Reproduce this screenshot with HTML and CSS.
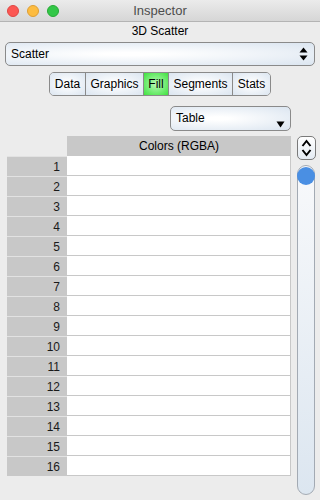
FILE: index.html
```html
<!DOCTYPE html>
<html lang="en">
<head>
    <meta charset="UTF-8">
    <meta name="viewport" content="width=device-width, initial-scale=1.0">
    <title>Inspector</title>
    <link rel="stylesheet" href="styles.css">
</head>
<body>

    <div class="window">

        <!-- Title bar -->
        <div class="titlebar">
            <div class="lights">
                <span class="light red"></span>
                <span class="light yellow"></span>
                <span class="light green"></span>
            </div>
            <div class="title">Inspector</div>
            <div></div>
        </div>

        <div class="subtitle">3D Scatter</div>

        <!-- Plot type popup -->
        <div class="popup main-popup">
            <span>Scatter</span>
            <svg class="updown" width="9" height="14" viewBox="0 0 9 14">
                <path d="M4.5 0.5 L8.5 5.5 L0.5 5.5 Z" fill="#000"/>
                <path d="M4.5 13.5 L8.5 8.5 L0.5 8.5 Z" fill="#000"/>
            </svg>
        </div>

        <!-- Tabs -->
        <div class="tabs-row">
            <div class="tabs">
                <div class="tab tab-data">Data</div>
                <div class="tab tab-graphics">Graphics</div>
                <div class="tab tab-fill selected">Fill</div>
                <div class="tab tab-segments">Segments</div>
                <div class="tab tab-stats">Stats</div>
            </div>
        </div>

        <div class="toolbar">
            <div class="popup table-popup">
                <span>Table</span>
                <svg class="down" width="9" height="7" viewBox="0 0 9 7">
                    <path d="M0.5 0.5 L8.5 0.5 L4.5 6.5 Z" fill="#000"/>
                </svg>
            </div>
        </div>

        <!-- Table and scroller -->
        <div class="content">
            <div class="grid" id="grid">
                <div class="corner"></div>
                <div class="col-header">Colors (RGBA)</div>
            </div>

            <div class="side">
                <div class="stepper">
                    <svg width="11" height="18" viewBox="0 0 11 18">
                        <path d="M1.5 7 L5.5 2 L9.5 7" fill="none" stroke="#000" stroke-width="2"/>
                        <path d="M1.5 11 L5.5 16 L9.5 11" fill="none" stroke="#000" stroke-width="2"/>
                    </svg>
                </div>
                <div class="track">
                    <div class="knob"></div>
                </div>
            </div>
        </div>

    </div>

    <script>
        const grid = document.getElementById('grid');
        for (let i = 1; i <= 16; i++) {
            const head = document.createElement('div');
            head.className = 'row-header';
            head.textContent = i;
            const cell = document.createElement('div');
            cell.className = 'cell';
            grid.appendChild(head);
            grid.appendChild(cell);
        }
    </script>

</body>
</html>
```

FILE: styles.css
```css
body {
    margin: 0;
    padding: 0;
    font-family: "Liberation Sans", Arial, sans-serif;
    font-size: 12px;
    color: #000;
    background-color: #ececec;
}
.window {
    width: 320px;
    height: 500px;
    display: flex;
    flex-direction: column;
    overflow: hidden;
}
.titlebar {
    height: 21px;
    display: grid;
    grid-template-columns: 1fr auto 1fr;
    align-items: center;
    background: linear-gradient(#ebebeb, #d6d6d6);
    border-bottom: 1px solid #b4b4b4;
}
.lights {
    display: flex;
    gap: 8px;
    padding-left: 7px;
}
.light {
    width: 12px;
    height: 12px;
    border-radius: 50%;
    box-sizing: border-box;
}
.red {
    background: #fc5753;
    border: 1px solid #df4744;
}
.yellow {
    background: #fdbc40;
    border: 1px solid #de9f34;
}
.green {
    background: #33c748;
    border: 1px solid #27aa35;
}
.title {
    font-size: 13px;
    color: #4d4d4d;
}
.subtitle {
    height: 20px;
    line-height: 18px;
    text-align: center;
    font-size: 12px;
}
.popup {
    box-sizing: border-box;
    display: flex;
    align-items: center;
    justify-content: space-between;
    border: 1px solid #8a8a8a;
    border-radius: 5px;
    background: radial-gradient(ellipse at 40% 50%, #ffffff 10%, #dbe5f0 100%);
    padding: 0 6px 0 5px;
}
.main-popup {
    margin: 0 5px;
    height: 24px;
}
.tabs-row {
    display: flex;
    justify-content: center;
    margin-top: 6px;
}
.tabs {
    display: flex;
    height: 24px;
    border: 1px solid #8a8a8a;
    border-radius: 5px;
    overflow: hidden;
    box-sizing: border-box;
}
.tab {
    box-sizing: border-box;
    display: flex;
    align-items: center;
    justify-content: center;
    border-left: 1px solid #8a8a8a;
    background: radial-gradient(ellipse at 50% 50%, #ffffff 10%, #dbe5f0 100%);
}
.tab-data {
    width: 35px;
    border-left: none;
}
.tab-graphics {
    width: 58px;
}
.tab-fill {
    width: 25px;
}
.tab-segments {
    width: 64px;
}
.tab-stats {
    width: 38px;
}
.tab.selected {
    background: radial-gradient(ellipse at 50% 50%, #b8fab8 0%, #3fe23f 100%);
}
.toolbar {
    display: flex;
    justify-content: flex-end;
    padding-right: 29px;
    margin-top: 10px;
}
.table-popup {
    width: 121px;
    height: 25px;
    align-items: flex-start;
    padding-top: 4px;
    padding-right: 5px;
}
.table-popup .down {
    margin-top: 10px;
}
.content {
    display: flex;
    gap: 6px;
    margin-top: 5px;
    padding-left: 7px;
}
.grid {
    display: grid;
    grid-template-columns: 60px 224px;
    grid-auto-rows: 20px;
    align-self: flex-start;
}
.col-header {
    background-color: #c8c8c8;
    display: flex;
    align-items: center;
    justify-content: center;
}
.row-header {
    background-color: #c8c8c8;
    border-top: 1px solid #e2e2e2;
    text-align: right;
    padding-right: 7px;
    line-height: 21px;
    color: #1a1a1a;
}
.cell {
    background-color: #fff;
    border-bottom: 1px solid #c8c8c8;
    border-right: 1px solid #c8c8c8;
}
.side {
    display: flex;
    flex-direction: column;
    gap: 5px;
    width: 19px;
}
.stepper {
    box-sizing: border-box;
    height: 24px;
    width: 19px;
    border: 1px solid #7a7a7a;
    border-radius: 5px;
    background: linear-gradient(#ffffff, #e4ebf3);
    display: flex;
    align-items: center;
    justify-content: center;
}
.track {
    box-sizing: border-box;
    width: 18px;
    height: 330px;
    border: 1px solid #a3aab3;
    border-radius: 9px;
    background: linear-gradient(#f8f9fb, #dce6f0);
    padding: 1px 0 0 0;
}
.knob {
    width: 18px;
    height: 18px;
    margin-left: -1px;
    border-radius: 50%;
    background: #4a8fe3;
}
```
